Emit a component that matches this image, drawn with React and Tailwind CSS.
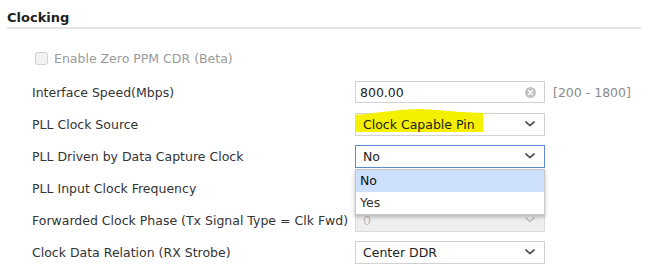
import { useState } from 'react'

function Chevron({ disabled }) {
  return (
    <svg width="10" height="6" viewBox="0 0 10 6" className="shrink-0">
      <path d="M1 1l4 3.6L9 1" fill="none" stroke={disabled ? '#c4c4c4' : '#555'} strokeWidth="1.7" strokeLinecap="round" strokeLinejoin="round" />
    </svg>
  )
}

function ClearIcon() {
  return (
    <svg width="11" height="11" viewBox="0 0 11 11" className="shrink-0">
      <circle cx="5.5" cy="5.5" r="5.5" fill="#c2c2c2" />
      <path d="M3.6 3.6l3.8 3.8M7.4 3.6l-3.8 3.8" stroke="#fff" strokeWidth="1.4" strokeLinecap="round" />
    </svg>
  )
}

function Select({ value, focused, disabled, highlight, children }) {
  const border = focused ? 'border-[#5a8bd4]' : disabled ? 'border-[#dcdcdc]' : 'border-[#d2d2d2]'
  const bg = disabled ? 'bg-[#efefef]' : 'bg-white'
  return (
    <div className={`relative flex h-[23px] w-[190px] items-center justify-between border ${border} ${bg} pl-[7px] pr-[9px]`}>
      {highlight && (
        <svg className="absolute left-[-1px] top-[-5px]" width="128" height="23" viewBox="0 0 128 23">
          <path d="M0 6 C 30 3, 50 0, 62 0 C 80 0, 95 3, 128 4 L 128 23 L 0 23 Z" fill="#f5f000" />
        </svg>
      )}
      <span className={`relative ${disabled ? 'text-[#c0c0c0]' : 'text-[#222]'}`}>{value}</span>
      <Chevron disabled={disabled} />
      {children}
    </div>
  )
}

function Row({ label, children }) {
  return (
    <div className="flex h-8 items-center">
      <div className="w-[323px] whitespace-nowrap text-[#333]">{label}</div>
      {children}
    </div>
  )
}

export default function App() {
  const [speed] = useState('800.00')
  return (
    <div className="h-[271px] w-[648px] overflow-hidden bg-white text-[12.5px] leading-[15px]" style={{ fontFamily: '"DejaVu Sans", Verdana, sans-serif' }}>
      <div className="px-[7px] pt-[10px]">
        <h2 className="text-[13px] font-bold leading-[16px] text-[#222]">Clocking</h2>
        <div className="mt-[1px] h-[2px] bg-[#e4e4e4]" />
      </div>

      <div className="mt-[21px] flex h-4 items-center pl-[35px]">
        <span className="h-[13px] w-[13px] rounded-[3px] border border-[#cfcfcf] bg-[#f2f2f2]" />
        <span className="ml-[6px] text-[#9a9a9a]">Enable Zero PPM CDR (Beta)</span>
      </div>

      <div className="mt-[10px] pl-[32px]">
        <Row label="Interface Speed(Mbps)">
          <div className="flex h-[22px] w-[190px] items-center justify-between border border-[#d2d2d2] bg-white pl-[4px] pr-[8px]">
            <span className="text-[#222]">{speed}</span>
            <ClearIcon />
          </div>
          <span className="ml-[8px] text-[#8a8a8a]">[200 - 1800]</span>
        </Row>
        <Row label="PLL Clock Source">
          <Select value="Clock Capable Pin" highlight />
        </Row>
        <Row label="PLL Driven by Data Capture Clock">
          <Select value="No" focused>
            <div className="absolute left-[-1px] top-[23px] z-10 w-[190px] border border-[#c8c8c8] bg-white shadow-[0_2px_4px_rgba(0,0,0,0.25)]">
              <div className="flex h-[22px] items-center bg-[#cce0fb] pl-[4px] text-[#111]">No</div>
              <div className="flex h-[22px] items-center pl-[4px] text-[#333]">Yes</div>
            </div>
          </Select>
        </Row>
        <Row label="PLL Input Clock Frequency">
          <div className="h-[22px] w-[190px] border border-[#d2d2d2] bg-white" />
        </Row>
        <Row label="Forwarded Clock Phase (Tx Signal Type = Clk Fwd)">
          <Select value="0" disabled />
        </Row>
        <Row label="Clock Data Relation (RX Strobe)">
          <Select value="Center DDR" />
        </Row>
      </div>
    </div>
  )
}
